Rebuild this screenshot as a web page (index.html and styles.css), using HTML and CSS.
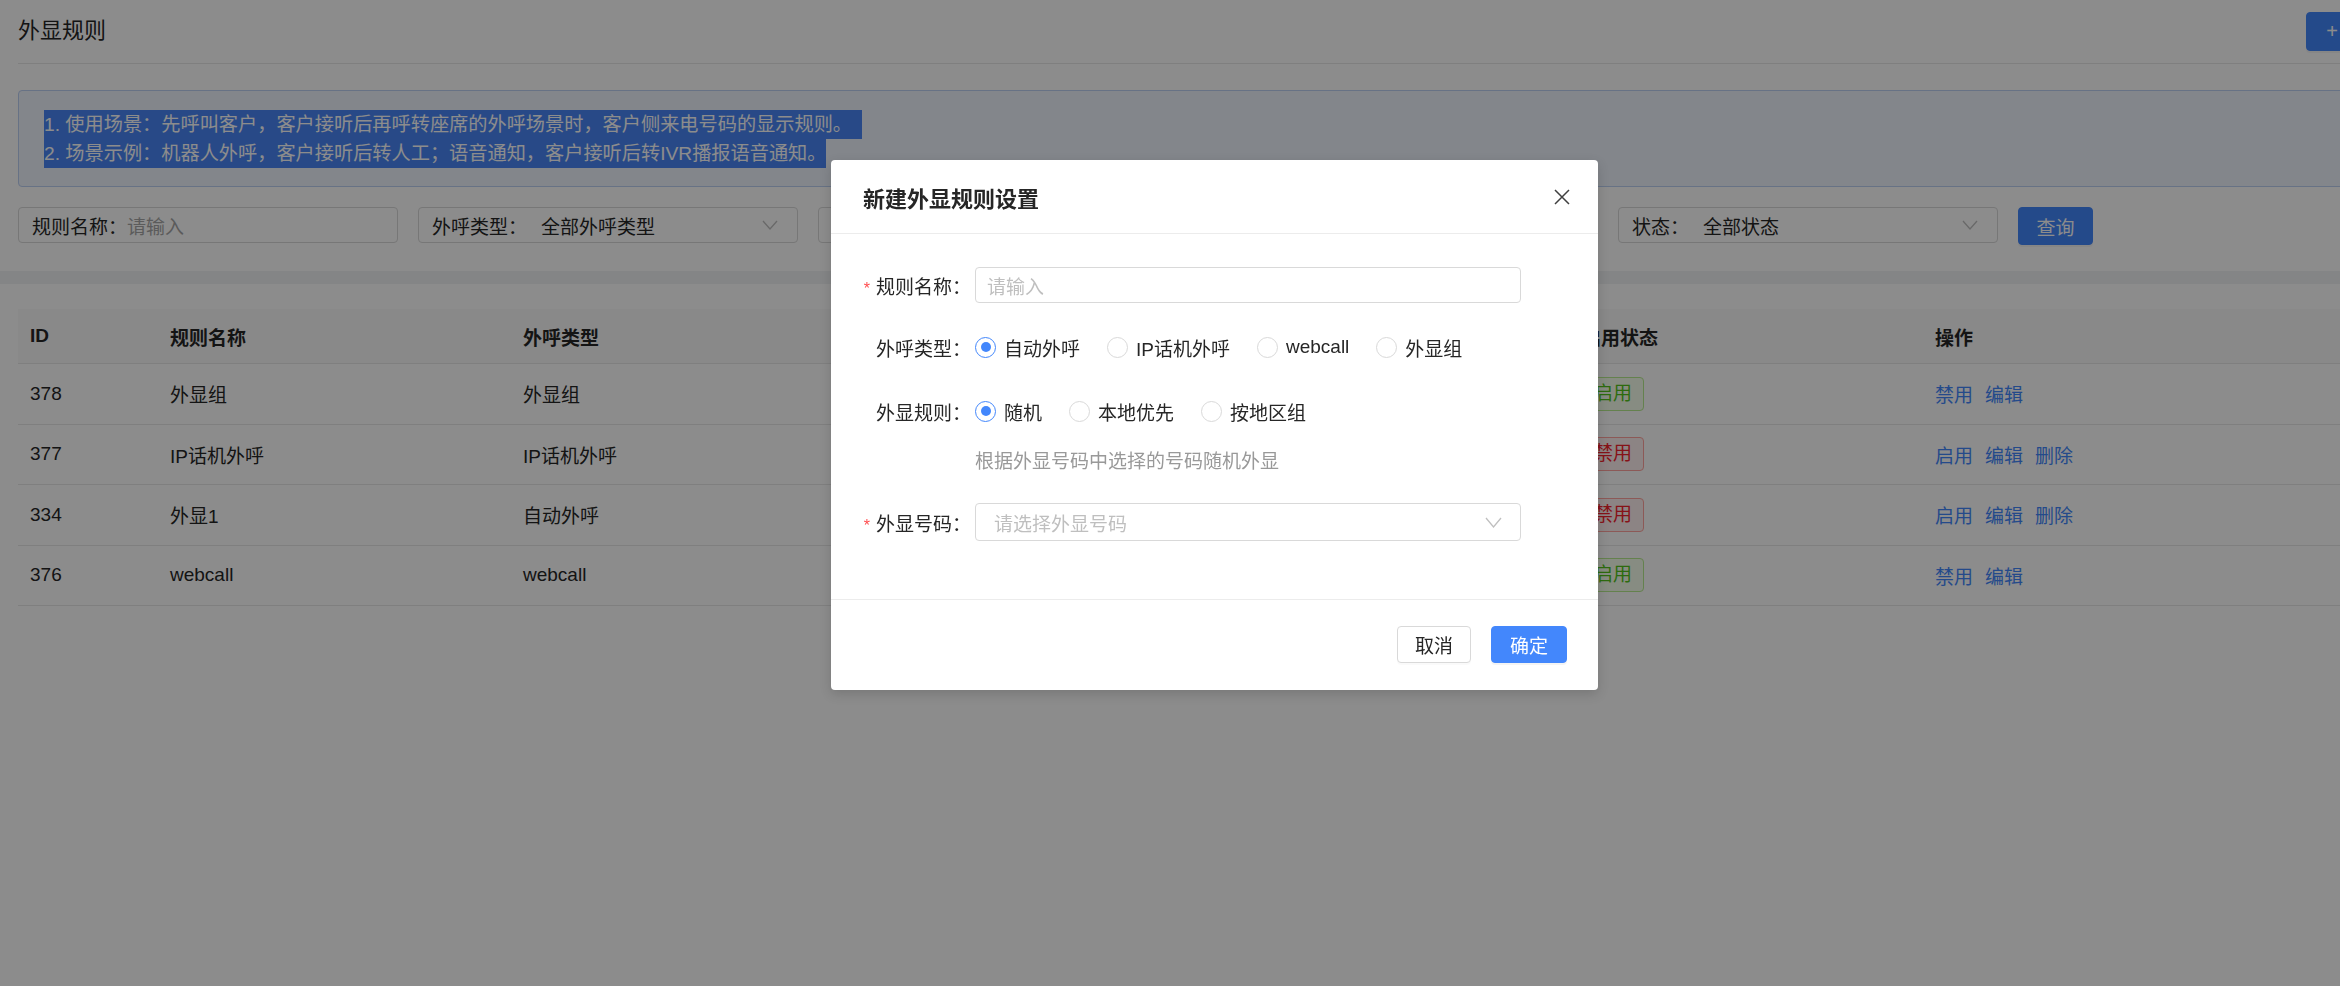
FILE: index.html
```html
<!DOCTYPE html>
<html lang="zh-CN">
<head>
<meta charset="utf-8">
<title>外显规则</title>
<link rel="stylesheet" href="styles.css">
</head>
<body>
<div class="page">
  <section class="top-card">
    <div class="title-bar">
      <h1 class="title">外显规则</h1>
      <button class="btn btn-primary new-btn"><span class="plus">+</span>新建规则</button>
    </div>
    <div class="notice">
      <span class="sel sel-1">1. 使用场景：先呼叫客户，客户接听后再呼转座席的外呼场景时，客户侧来电号码的显示规则。</span>
      <span class="sel">2. 场景示例：机器人外呼，客户接听后转人工；语音通知，客户接听后转IVR播报语音通知。</span>
    </div>
    <div class="filters">
      <div class="field">
        <span class="field-label">规则名称：</span><span class="placeholder">请输入</span>
      </div>
      <div class="field">
        <span class="field-label">外呼类型：</span><span class="field-value">全部外呼类型</span>
        <svg class="chev" viewBox="0 0 16 10" width="16" height="10"><polyline points="1,1 8,9 15,1" fill="none" stroke="#bfbfbf" stroke-width="1.3"/></svg>
      </div>
      <div class="field">
        <span class="field-label">外显规则：</span><span class="field-value">全部外显规则</span>
        <svg class="chev" viewBox="0 0 16 10" width="16" height="10"><polyline points="1,1 8,9 15,1" fill="none" stroke="#bfbfbf" stroke-width="1.3"/></svg>
      </div>
      <div class="field">
        <span class="field-label">外显号码：</span><span class="placeholder">请输入</span>
      </div>
      <div class="field">
        <span class="field-label">状态：</span><span class="field-value">全部状态</span>
        <svg class="chev" viewBox="0 0 16 10" width="16" height="10"><polyline points="1,1 8,9 15,1" fill="none" stroke="#bfbfbf" stroke-width="1.3"/></svg>
      </div>
      <button class="btn btn-primary query-btn">查询</button>
    </div>
  </section>
  <div class="band"></div>
  <section class="table-card">
    <div class="row head">
      <div class="cell">ID</div>
      <div class="cell">规则名称</div>
      <div class="cell">外呼类型</div>
      <div class="cell"></div>
      <div class="cell"></div>
      <div class="cell">启用状态</div>
      <div class="cell">操作</div>
    </div>
    <div class="row">
      <div class="cell">378</div>
      <div class="cell">外显组</div>
      <div class="cell">外显组</div>
      <div class="cell"></div>
      <div class="cell"></div>
      <div class="cell"><span class="tag tag-on">启用</span></div>
      <div class="cell"><a class="link">禁用</a><a class="link">编辑</a></div>
    </div>
    <div class="row">
      <div class="cell">377</div>
      <div class="cell">IP话机外呼</div>
      <div class="cell">IP话机外呼</div>
      <div class="cell"></div>
      <div class="cell"></div>
      <div class="cell"><span class="tag tag-off">禁用</span></div>
      <div class="cell"><a class="link">启用</a><a class="link">编辑</a><a class="link">删除</a></div>
    </div>
    <div class="row">
      <div class="cell">334</div>
      <div class="cell">外显1</div>
      <div class="cell">自动外呼</div>
      <div class="cell"></div>
      <div class="cell"></div>
      <div class="cell"><span class="tag tag-off">禁用</span></div>
      <div class="cell"><a class="link">启用</a><a class="link">编辑</a><a class="link">删除</a></div>
    </div>
    <div class="row">
      <div class="cell">376</div>
      <div class="cell">webcall</div>
      <div class="cell">webcall</div>
      <div class="cell"></div>
      <div class="cell"></div>
      <div class="cell"><span class="tag tag-on">启用</span></div>
      <div class="cell"><a class="link">禁用</a><a class="link">编辑</a></div>
    </div>
  </section>
</div>

<div class="mask"></div>

<div class="modal">
  <div class="modal-header">
    <span class="modal-title">新建外显规则设置</span>
    <svg class="close" viewBox="0 0 16 16" width="16" height="16"><path d="M1 1 L15 15 M15 1 L1 15" stroke="#404040" stroke-width="1.5" fill="none"/></svg>
  </div>
  <div class="modal-body">
    <div class="form-row row-1">
      <div class="form-label"><span class="req">*</span>规则名称：</div>
      <div class="input"><span class="placeholder-light">请输入</span></div>
    </div>
    <div class="form-row row-2">
      <div class="form-label">外呼类型：</div>
      <div class="radios">
        <label class="radio checked"><span class="dot"></span>自动外呼</label>
        <label class="radio"><span class="dot"></span>IP话机外呼</label>
        <label class="radio"><span class="dot"></span>webcall</label>
        <label class="radio"><span class="dot"></span>外显组</label>
      </div>
    </div>
    <div class="form-row row-3">
      <div class="form-label">外显规则：</div>
      <div class="radios">
        <label class="radio checked"><span class="dot"></span>随机</label>
        <label class="radio"><span class="dot"></span>本地优先</label>
        <label class="radio"><span class="dot"></span>按地区组</label>
      </div>
    </div>
    <div class="help">根据外显号码中选择的号码随机外显</div>
    <div class="form-row row-4">
      <div class="form-label"><span class="req">*</span>外显号码：</div>
      <div class="select"><span class="placeholder-light">请选择外显号码</span>
        <svg class="chev-sm" viewBox="0 0 17 11" width="17" height="11"><polyline points="1,1 8.5,10 16,1" fill="none" stroke="#bfbfbf" stroke-width="1.3"/></svg>
      </div>
    </div>
  </div>
  <div class="modal-footer">
    <button class="btn btn-default">取消</button>
    <button class="btn btn-primary btn-ok">确定</button>
  </div>
</div>
</body>
</html>
```

FILE: styles.css
```css
* { box-sizing: border-box; }

html, body {
  margin: 0;
  padding: 0;
}

body {
  width: 2340px;
  height: 986px;
  overflow: hidden;
  position: relative;
  background: #fff;
  color: #262626;
  font-family: "Liberation Sans", "Noto Sans CJK SC", sans-serif;
  font-size: 19px;
}

.page {
  width: 2460px;
}

/* ---------- top card ---------- */
.top-card {
  padding: 0 18px 26px;
}

.title-bar {
  height: 64px;
  border-bottom: 1px solid #e8e8e8;
  display: flex;
  align-items: flex-start;
  justify-content: space-between;
}

.title {
  margin: 0;
  font-size: 22px;
  font-weight: 400;
  line-height: 62px;
  color: #262626;
}

.btn {
  font-family: inherit;
  font-size: 19px;
  border-radius: 4px;
  cursor: pointer;
  display: inline-flex;
  align-items: center;
  justify-content: center;
  white-space: nowrap;
}

.btn-primary {
  background: #4387fc;
  border: 1px solid #4387fc;
  color: #fff;
  box-shadow: 0 2px 0 rgba(0, 0, 0, 0.045);
}

.btn-default {
  background: #fff;
  border: 1px solid #d9d9d9;
  color: #262626;
  box-shadow: 0 2px 0 rgba(0, 0, 0, 0.02);
}

.new-btn {
  margin-top: 12px;
  height: 39px;
  padding: 0 19px;
}

.plus {
  margin-right: 8px;
  font-size: 20px;
}

.notice {
  margin-top: 26px;
  border: 1px solid #bcd0f3;
  background: #eef4fe;
  border-radius: 4px;
  padding: 19px 25px 18px;
  font-size: 19.2px;
}

.sel {
  display: block;
  width: fit-content;
  line-height: 29px;
  background: #4a86f6;
  color: #fff;
  white-space: nowrap;
}

.sel-1 {
  padding-right: 10px;
}

.filters {
  margin-top: 20px;
  display: flex;
  gap: 20px;
  align-items: flex-start;
}

.field {
  width: 380px;
  height: 36px;
  border: 1px solid #d9d9d9;
  border-radius: 4px;
  display: flex;
  align-items: center;
  padding: 0 19px 0 13px;
  white-space: nowrap;
  flex-shrink: 0;
}

.field-label {
  color: #262626;
}

.field-value {
  margin-left: 14px;
  color: #262626;
}

.placeholder {
  color: #a6a6a6;
}

.chev {
  margin-left: auto;
}

.query-btn {
  width: 75px;
  height: 38px;
  padding: 0;
}

.band {
  height: 13px;
  background: #f0f2f5;
}

/* ---------- table ---------- */
.table-card {
  padding: 25px 18px 0;
}

.row {
  display: grid;
  grid-template-columns: 140px repeat(5, 353px) 1fr;
  align-items: center;
  height: 60.5px;
  border-bottom: 1px solid #e8e8e8;
}

.row.head {
  height: 55px;
  background: #fafafa;
  font-weight: 600;
  color: #262626;
}

.cell {
  padding-left: 12px;
  white-space: nowrap;
}

.tag {
  display: inline-block;
  height: 34px;
  line-height: 32px;
  padding: 0 11px;
  border: 1px solid;
  border-radius: 4px;
}

.tag-on {
  color: #52c41a;
  background: #f6ffed;
  border-color: #b7eb8f;
}

.tag-off {
  color: #f5222d;
  background: #fff1f0;
  border-color: #ffa39e;
}

.link {
  color: #4387fc;
  margin-right: 12px;
  cursor: pointer;
}

/* ---------- modal ---------- */
.mask {
  position: fixed;
  inset: 0;
  background: rgba(0, 0, 0, 0.45);
}

.modal {
  position: absolute;
  left: 831px;
  top: 160px;
  width: 767px;
  background: #fff;
  border-radius: 4px;
  box-shadow: 0 4px 12px rgba(0, 0, 0, 0.15);
}

.modal-header {
  height: 74px;
  border-bottom: 1px solid #ececec;
  display: flex;
  align-items: center;
  justify-content: space-between;
  padding: 0 28px 0 32px;
}

.modal-title {
  font-size: 22px;
  font-weight: 600;
  color: #262626;
}

.modal-body {
  padding: 33px 0 58px;
}

.form-row {
  display: flex;
  align-items: center;
}

.form-label {
  width: 144px;
  flex-shrink: 0;
  text-align: right;
  padding-right: 4px;
  color: #262626;
  white-space: nowrap;
}

.req {
  color: #ff4d4f;
  font-size: 16px;
  margin-right: 6px;
  font-family: "Liberation Sans", sans-serif;
}

.row-1 { height: 36px; margin-bottom: 26px; }
.row-2 { height: 36px; margin-bottom: 28px; }
.row-3 { height: 36px; }
.row-4 { height: 38px; }

.input {
  width: 546px;
  height: 36px;
  border: 1px solid #d9d9d9;
  border-radius: 4px;
  padding: 0 11px;
  display: flex;
  align-items: center;
}

.select {
  width: 546px;
  height: 38px;
  border: 1px solid #d9d9d9;
  border-radius: 4px;
  padding: 0 18px 0 18px;
  display: flex;
  align-items: center;
}

.chev-sm {
  margin-left: auto;
}

.placeholder-light {
  color: #bfbfbf;
}

.radios {
  display: flex;
  align-items: center;
}

.radio {
  display: inline-flex;
  align-items: center;
  margin-right: 27px;
  color: #262626;
  white-space: nowrap;
}

.dot {
  width: 21px;
  height: 21px;
  border: 1px solid #d9d9d9;
  border-radius: 50%;
  margin-right: 8px;
  position: relative;
  flex-shrink: 0;
}

.radio.checked .dot {
  border-color: #4387fc;
}

.radio.checked .dot::after {
  content: "";
  position: absolute;
  left: 4.5px;
  top: 4.5px;
  width: 10px;
  height: 10px;
  border-radius: 50%;
  background: #4387fc;
}

.help {
  margin: 19px 0 27px 144px;
  line-height: 28px;
  color: #999;
}

.modal-footer {
  border-top: 1px solid #ececec;
  padding: 26px 31px 27px;
  display: flex;
  justify-content: flex-end;
  gap: 20px;
}

.modal-footer .btn {
  height: 37px;
  padding: 0 17px;
}

.modal-footer .btn-ok {
  padding: 0 18px;
}
```
